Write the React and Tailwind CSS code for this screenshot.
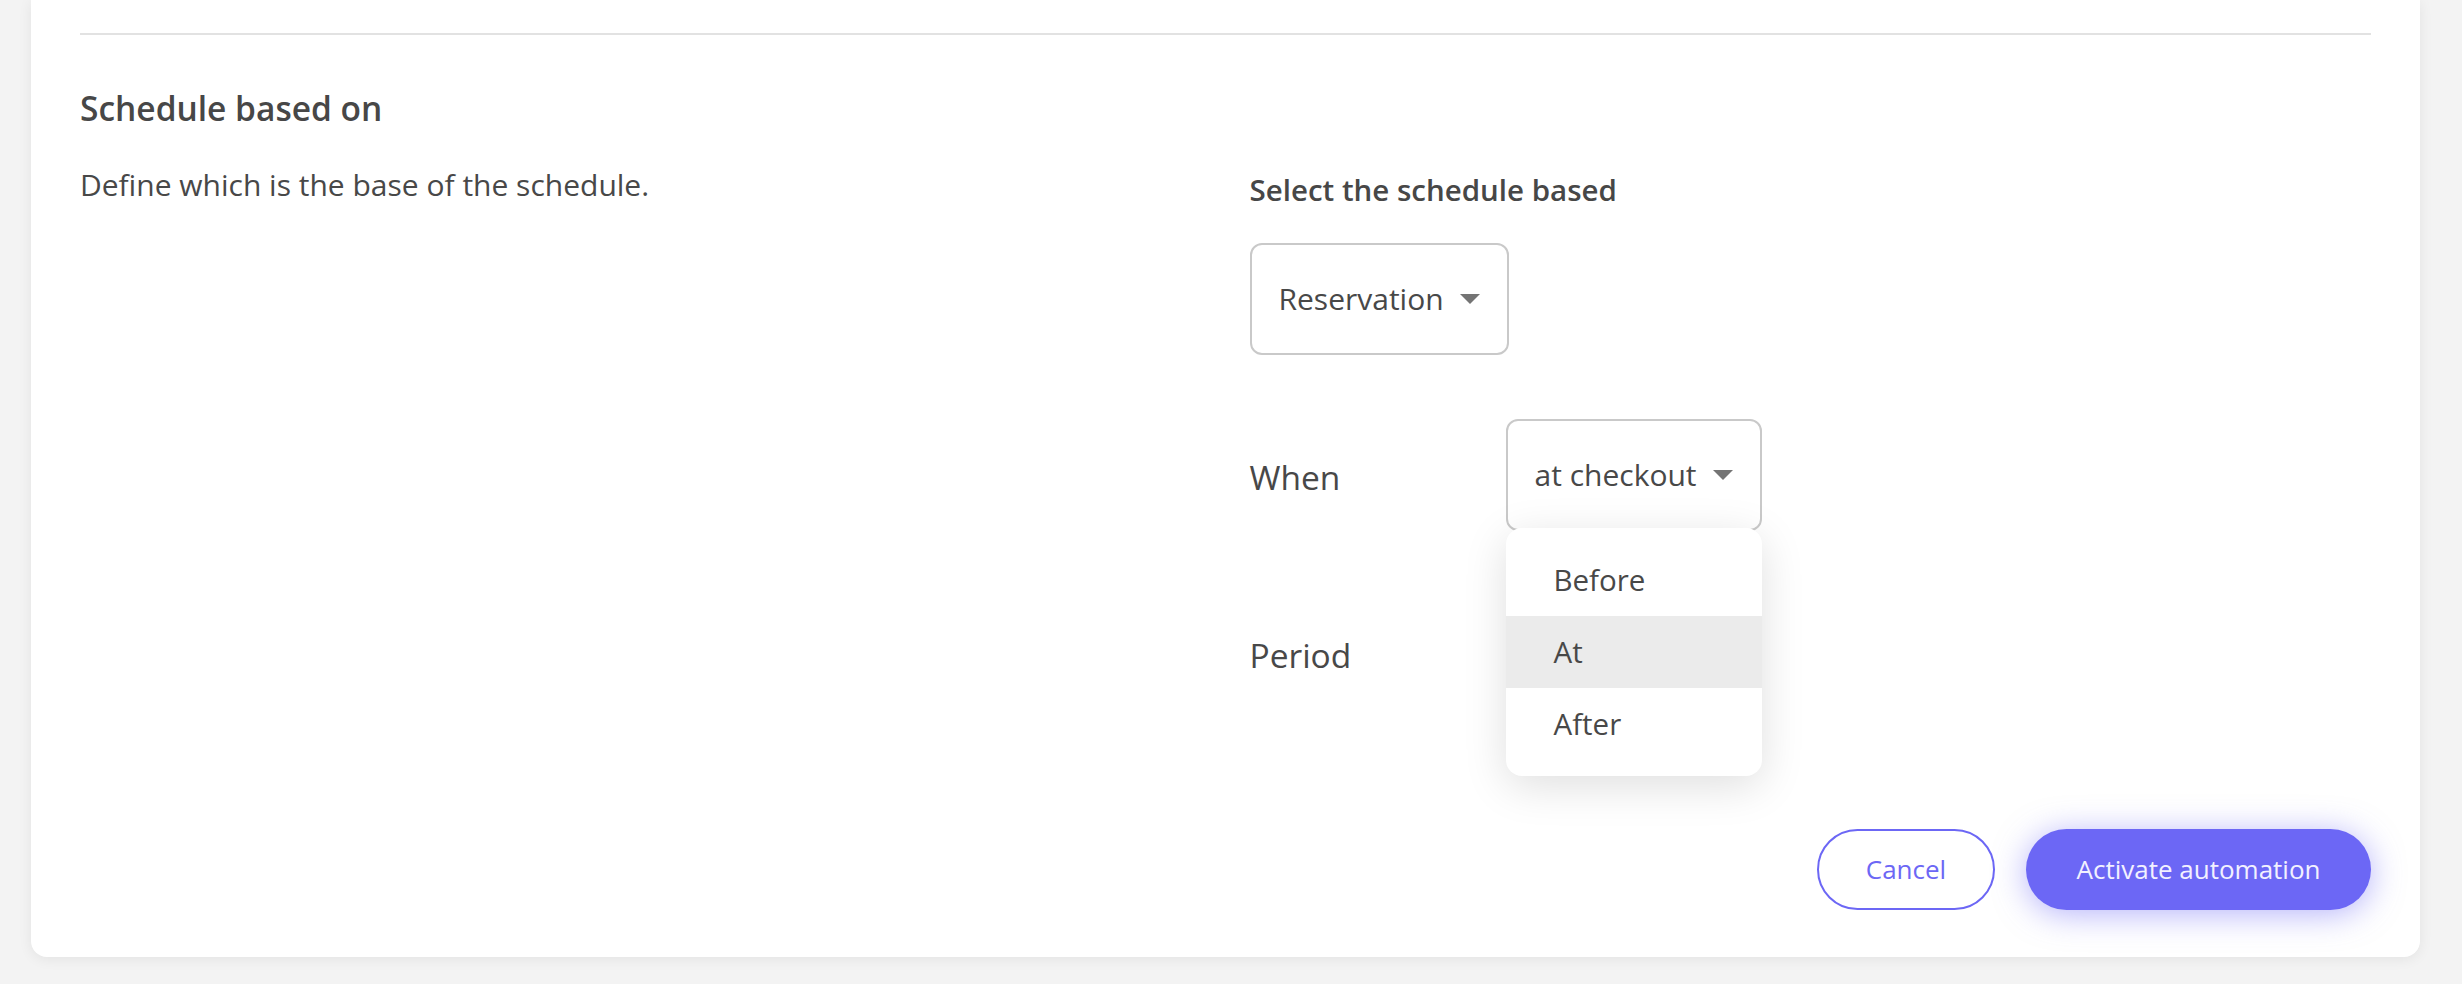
import React from "react";

const font = { fontFamily: '"Open Sans", "Noto Sans", sans-serif' };

function Caret() {
  return (
    <svg width="20" height="10" viewBox="0 0 20 10" className="shrink-0">
      <path d="M0 0 L20 0 L10 10 Z" fill="#747474" />
    </svg>
  );
}

function SelectBox({ value }) {
  return (
    <div className="inline-flex h-[112px] items-center gap-[16px] rounded-[12px] border-2 border-[#c9c9c9] bg-white pl-[27px] pr-[27px]">
      <span className="text-[30px] leading-none text-[#484848]">{value}</span>
      <Caret />
    </div>
  );
}

export default function App() {
  return (
    <div className="flex h-[984px] w-full flex-col bg-[#f3f3f3] pb-[27px] pl-[31px] pr-[42px]" style={font}>
      <div className="flex flex-1 flex-col rounded-b-[16px] bg-white px-[49px] pb-[47px] shadow-[0_2px_14px_rgba(0,0,0,0.07)]">
        <div className="mt-[33px] h-[2px] w-full bg-[#e2e2e2]" />
        <h2 className="mt-[49px] text-[33.5px] font-semibold leading-[48px] text-[#474747]">
          Schedule based on
        </h2>
        <div className="mt-[33px] grid grid-cols-2 gap-x-[48px]">
          <p className="text-[30px] leading-[40px] text-[#484848]">
            Define which is the base of the schedule.
          </p>
          <div className="flex flex-col">
            <div className="text-[29.5px] font-semibold leading-[50px] text-[#474747]">
              Select the schedule based
            </div>
            <div className="mt-[28px]">
              <SelectBox value="Reservation" />
            </div>
            <div className="mt-[64px] flex h-[112px] items-center">
              <div className="w-[256px] pt-[4px] text-[33.5px] text-[#484848]">When</div>
              <div className="relative">
                <SelectBox value="at checkout" />
                <div className="absolute left-0 top-[109px] z-10 w-[256px] rounded-[16px] bg-white py-[16px] shadow-[0_10px_44px_rgba(0,0,0,0.13)]">
                  <div className="flex h-[72px] items-center pl-[48px] text-[29.5px] text-[#484848]">Before</div>
                  <div className="flex h-[72px] items-center bg-[#ebebeb] pl-[48px] text-[29.5px] text-[#484848]">At</div>
                  <div className="flex h-[72px] items-center pl-[48px] text-[29.5px] text-[#484848]">After</div>
                </div>
              </div>
            </div>
            <div className="mt-[66px] flex h-[112px] items-center">
              <div className="w-[256px] pt-[4px] text-[33.5px] text-[#484848]">Period</div>
            </div>
          </div>
        </div>
        <div className="mt-auto flex justify-end gap-[31px]">
          <button className="flex h-[81px] w-[178px] items-center justify-center rounded-full border-2 border-[#6c67f5] bg-white text-[26px] text-[#6c67f5]">
            Cancel
          </button>
          <button className="flex h-[81px] w-[345px] items-center justify-center rounded-full bg-[#6c67f5] text-[26px] text-[#f2f1ff] shadow-[0_4px_32px_rgba(108,103,245,0.5)]">
            Activate automation
          </button>
        </div>
      </div>
    </div>
  );
}
